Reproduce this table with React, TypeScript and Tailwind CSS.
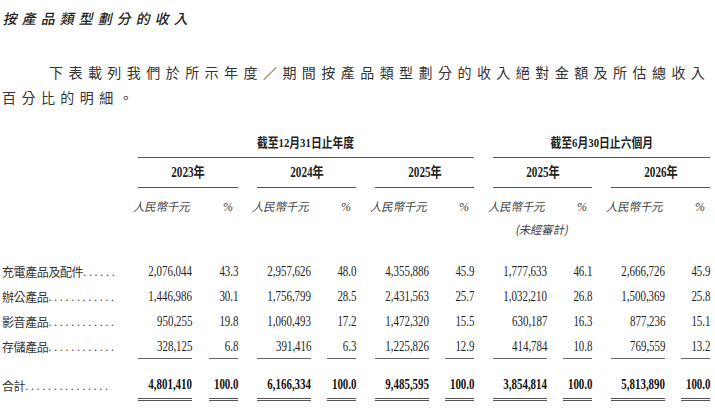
import React from "react";

const GRID = "grid grid-cols-[119px_100px_99px_99px_99px_99px] gap-x-[19px]";
const CJK = "font-['Noto_Sans_CJK_TC',sans-serif]";
const NUM = "font-['Liberation_Serif','Noto_Sans_CJK_TC',serif]";

const rows: { label: string; dots: string; values: [string, string][] }[] = [
  {
    label: "充電產品及配件",
    dots: "......",
    values: [
      ["2,076,044", "43.3"],
      ["2,957,626", "48.0"],
      ["4,355,886", "45.9"],
      ["1,777,633", "46.1"],
      ["2,666,726", "45.9"],
    ],
  },
  {
    label: "辦公產品",
    dots: "............",
    values: [
      ["1,446,986", "30.1"],
      ["1,756,799", "28.5"],
      ["2,431,563", "25.7"],
      ["1,032,210", "26.8"],
      ["1,500,369", "25.8"],
    ],
  },
  {
    label: "影音產品",
    dots: "............",
    values: [
      ["950,255", "19.8"],
      ["1,060,493", "17.2"],
      ["1,472,320", "15.5"],
      ["630,187", "16.3"],
      ["877,236", "15.1"],
    ],
  },
  {
    label: "存儲產品",
    dots: "............",
    values: [
      ["328,125", "6.8"],
      ["391,416", "6.3"],
      ["1,225,826", "12.9"],
      ["414,784", "10.8"],
      ["769,559", "13.2"],
    ],
  },
];

const totals: [string, string][] = [
  ["4,801,410", "100.0"],
  ["6,166,334", "100.0"],
  ["9,485,595", "100.0"],
  ["3,854,814", "100.0"],
  ["5,813,890", "100.0"],
];

const years = ["2023年", "2024年", "2025年", "2025年", "2026年"];

function Label({ text, dots }: { text: string; dots: string }) {
  return (
    <div className="flex items-center pl-[2px] whitespace-nowrap">
      <span className={`${CJK} text-[12px] tracking-[-0.4px] text-[#333]`}>{text}</span>
      <span className={`${NUM} text-[12px] tracking-[2.7px] text-[#444]`}>{dots}</span>
    </div>
  );
}

// numbers in the source are a narrow Times cut, so squeeze them sideways
function Num({ children, bold }: { children: React.ReactNode; bold?: boolean }) {
  return (
    <span className={`inline-block origin-right scale-x-[0.78] text-[14px] ${bold ? "font-bold" : ""}`}>
      {children}
    </span>
  );
}

export default function App() {
  return (
    <div className="w-[715px] h-[410px] bg-white overflow-hidden text-[#222]">
      {/* heading */}
      <div className={`${CJK} h-[36px] flex items-center pl-[4px] text-[14px] font-medium text-[#222]`}>
        <span className="inline-block origin-left -skew-x-12 tracking-[5px]">按產品類型劃分的收入</span>
      </div>

      {/* intro paragraph */}
      <div className={`${CJK} mt-[24px] text-[14px] leading-[25px] tracking-[5.45px] text-[#333] whitespace-nowrap`}>
        <div className="pl-[49px]">
          下表載列我們於所示年度／期間按產品類型劃分的收入絕對金額及所估總收入
        </div>
        <div className="pl-[2px]">百分比的明細。</div>
      </div>

      {/* period headers */}
      <div className={`${GRID} mt-[20px]`}>
        <div />
        <div className={`${NUM} col-span-3 h-[28px] pb-[2px] flex items-center justify-center border-b border-[#555]`}>
          <span className="inline-block scale-x-[0.83] text-[13px] font-bold">截至12月31日止年度</span>
        </div>
        <div className={`${NUM} col-span-2 h-[28px] pb-[2px] flex items-center justify-center border-b border-[#555]`}>
          <span className="inline-block scale-x-[0.83] text-[13px] font-bold">截至6月30日止六個月</span>
        </div>
      </div>

      {/* year headers */}
      <div className={GRID}>
        <div />
        {years.map((y, i) => (
          <div
            key={i}
            className={`${NUM} h-[30px] flex items-center justify-center border-b border-[#555]`}
          >
            <span className="inline-block scale-x-[0.8] text-[14px] font-bold">{y}</span>
          </div>
        ))}
      </div>

      {/* unit row */}
      <div className={`${GRID} mt-[7px]`}>
        <div />
        {years.map((_, i) => (
          <div key={i} className="h-[24px] -ml-[4px] mr-[5px] flex items-center justify-between text-[#444]">
            <span className={`${CJK} inline-block -skew-x-12 text-[11.5px] tracking-[-0.2px]`}>人民幣千元</span>
            <span className={`${NUM} italic text-[12px]`}>%</span>
          </div>
        ))}
      </div>

      <div className={GRID}>
        <div />
        <div />
        <div />
        <div />
        <div className="h-[22px] flex items-center justify-center text-[#444]">
          <span className={`${CJK} inline-block -skew-x-12 text-[11.5px] tracking-[-0.2px]`}>(未經審計)</span>
        </div>
        <div />
      </div>

      {/* body rows */}
      <div className={`${NUM} mt-[18px]`}>
        {rows.map((r, ri) => (
          <div key={ri} className={`${GRID} h-[25px]`}>
            <Label text={r.label} dots={r.dots} />
            {r.values.map(([amt, pct], i) => (
              <div key={i} className="flex justify-between text-[#222]">
                <div
                  className={`w-[54px] flex items-center justify-end ${
                    ri === rows.length - 1 ? "border-b border-[#666]" : ""
                  }`}
                >
                  <Num>{amt}</Num>
                </div>
                <div
                  className={`w-[29px] flex items-center justify-end ${
                    ri === rows.length - 1 ? "border-b border-[#666]" : ""
                  }`}
                >
                  <Num>{pct}</Num>
                </div>
              </div>
            ))}
          </div>
        ))}

        {/* total */}
        <div className={`${GRID} h-[42px]`}>
          <div className="pt-[12px] flex">
            <Label text="合計" dots=" ..............." />
          </div>
          {totals.map(([amt, pct], i) => (
            <div key={i} className="flex justify-between text-[#111]">
              <div className="w-[54px] pt-[12px] pb-[1px] flex items-center justify-end border-b-[3px] border-double border-[#555]">
                <Num bold>{amt}</Num>
              </div>
              <div className="w-[29px] pt-[12px] pb-[1px] flex items-center justify-end border-b-[3px] border-double border-[#555]">
                <Num bold>{pct}</Num>
              </div>
            </div>
          ))}
        </div>
      </div>
    </div>
  );
}
